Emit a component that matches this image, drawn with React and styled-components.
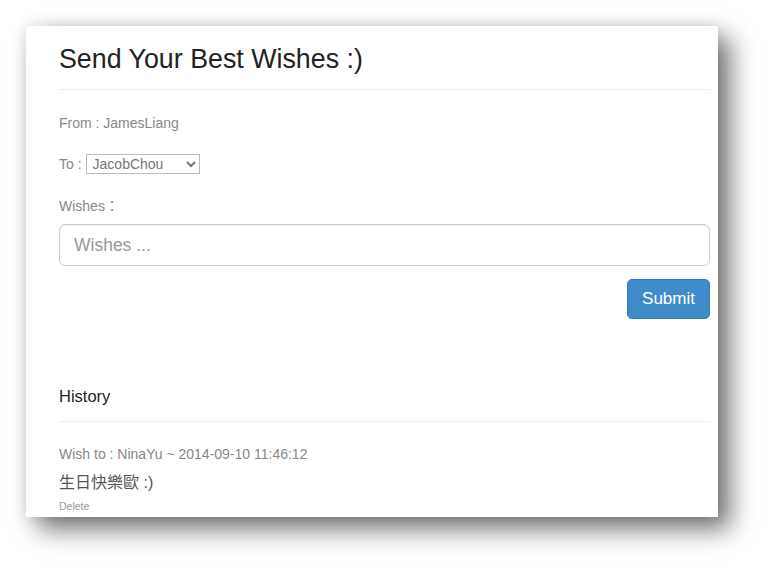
import React from "react";
import styled, { createGlobalStyle } from "styled-components";

const GlobalStyle = createGlobalStyle`
  html, body {
    margin: 0;
    padding: 0;
    background: #fff;
  }
  body {
    font-family: "Liberation Sans", Arial, "Noto Sans CJK TC", sans-serif;
    color: #333;
  }
`;

const history = [
  {
    to: "NinaYu",
    time: "2014-09-10 11:46:12",
    message: "生日快樂歐 :)",
  },
];

const App = () => {
  return (
    <Page>
      <GlobalStyle />
      <Card>
        <Title>Send Your Best Wishes :)</Title>
        <Field>From : JamesLiang</Field>
        <ToRow>
          <span>To :</span>
          <Select defaultValue="JacobChou">
            <option>JacobChou</option>
            <option>NinaYu</option>
            <option>JamesLiang</option>
          </Select>
        </ToRow>
        <WishLabel>Wishes：</WishLabel>
        <WishInput placeholder="Wishes ..." />
        <Actions>
          <SubmitButton type="button">Submit</SubmitButton>
        </Actions>
        <SectionTitle>History</SectionTitle>
        {history.map((item, index) => (
          <HistoryItem key={index}>
            <Meta>
              Wish to : {item.to} ~ {item.time}
            </Meta>
            <Message>{item.message}</Message>
            <DeleteLink href="#">Delete</DeleteLink>
          </HistoryItem>
        ))}
      </Card>
    </Page>
  );
};

export default App;

const Page = styled.div`
  padding: 26px 0 0 26px;
  height: 569px;
  box-sizing: border-box;
`;

const Card = styled.div`
  width: 692px;
  height: 491px;
  box-sizing: border-box;
  padding: 18px 8px 0 33px;
  background: #fff;
  overflow: hidden;
  box-shadow: 12px 12px 24px rgba(0, 0, 0, 0.55),
    0 0 14px rgba(0, 0, 0, 0.1);
`;

const Title = styled.h1`
  margin: 0;
  font-size: 26.8px;
  line-height: 30px;
  font-weight: normal;
  color: #222;
  padding-bottom: 15px;
  border-bottom: 1px solid #eee;
`;

const Field = styled.div`
  margin-top: 23px;
  font-size: 14px;
  line-height: 20px;
  color: #888;
`;

const ToRow = styled.div`
  margin-top: 21px;
  display: flex;
  align-items: center;
  font-size: 14px;
  color: #888;
  & > span {
    margin-right: 4px;
  }
`;

const Select = styled.select`
  width: 114px;
  height: 20px;
  font-family: "Liberation Sans", Arial, sans-serif;
  font-size: 14px;
  color: #777;
  border: 1px solid #bbb;
  border-radius: 0;
  background: #fff;
  padding: 0 0 0 2px;
`;

const WishLabel = styled.div`
  margin-top: 22px;
  font-size: 14px;
  line-height: 20px;
  color: #888;
`;

const WishInput = styled.input`
  display: block;
  margin-top: 8px;
  width: 100%;
  height: 42px;
  box-sizing: border-box;
  padding: 0 14px;
  font-family: "Liberation Sans", Arial, sans-serif;
  font-size: 17.5px;
  color: #555;
  border: 1px solid #ccc;
  border-radius: 6px;
  box-shadow: inset 0 1px 1px rgba(0, 0, 0, 0.075);
  outline: none;
  &::placeholder {
    color: #999;
  }
`;

const Actions = styled.div`
  margin-top: 13px;
  display: flex;
  justify-content: flex-end;
`;

const SubmitButton = styled.button`
  height: 40px;
  padding: 0 14px;
  font-family: "Liberation Sans", Arial, sans-serif;
  font-size: 17px;
  color: #fff;
  background: #428bca;
  border: 1px solid #357ebd;
  border-radius: 5px;
  cursor: pointer;
`;

const SectionTitle = styled.h3`
  margin: 66px 0 0;
  font-size: 16.5px;
  line-height: 22px;
  font-weight: normal;
  color: #222;
  padding-bottom: 14px;
  border-bottom: 1px solid #eee;
`;

const HistoryItem = styled.div`
  margin-top: 22px;
`;

const Meta = styled.div`
  font-size: 14px;
  line-height: 20px;
  color: #888;
`;

const Message = styled.div`
  margin-top: 7px;
  font-size: 16px;
  line-height: 24px;
  color: #555;
`;

const DeleteLink = styled.a`
  display: block;
  margin-top: 3px;
  font-size: 10.5px;
  line-height: 16px;
  color: #999;
  text-decoration: none;
`;
